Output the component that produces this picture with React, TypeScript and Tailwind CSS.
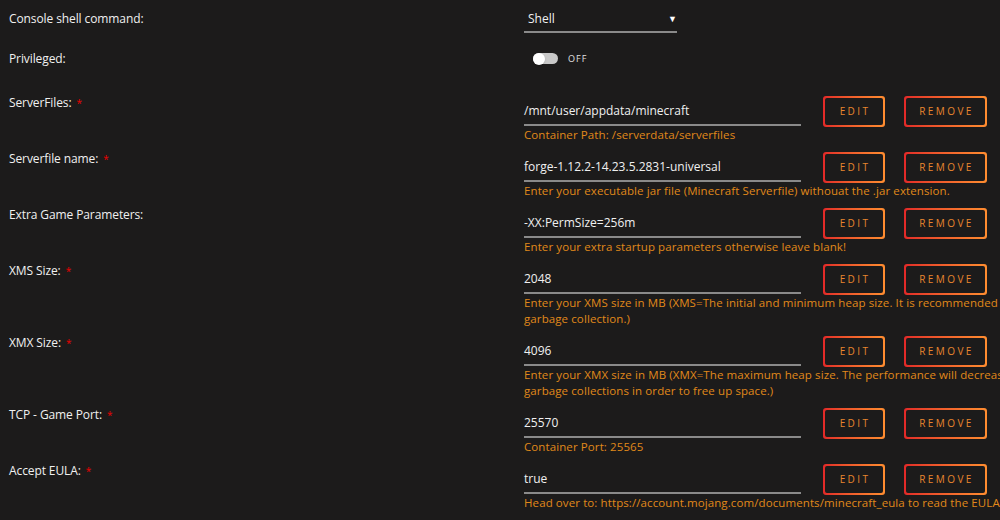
import React from "react";

const font = { fontFamily: '"Open Sans", "Liberation Sans", sans-serif' };

function Btn({ label, w }: { label: string; w: string }) {
  return (
    <div className={`rounded-[3px] bg-gradient-to-r from-[#e22828] to-[#ff8d30] p-[2px] ${w} h-[31px]`}>
      <div className="w-full h-full rounded-[2px] bg-[#1c1b1b] flex items-center justify-center text-[10px] tracking-[2.4px] font-medium text-[#e8862e] pl-[2px]">
        {label}
      </div>
    </div>
  );
}

type Row = { label: string; req?: boolean; value: string; desc: string[] };

const rows: Row[] = [
  { label: "ServerFiles:", req: true, value: "/mnt/user/appdata/minecraft", desc: ["Container Path: /serverdata/serverfiles"] },
  { label: "Serverfile name:", req: true, value: "forge-1.12.2-14.23.5.2831-universal", desc: ["Enter your executable jar file (Minecraft Serverfile) withouat the .jar extension."] },
  { label: "Extra Game Parameters:", value: "-XX:PermSize=256m", desc: ["Enter your extra startup parameters otherwise leave blank!"] },
  { label: "XMS Size:", req: true, value: "2048", desc: ["Enter your XMS size in MB (XMS=The initial and minimum heap size. It is recommended to set the minimum heap size equivalent to the maximum heap size in order to minimize the", "garbage collection.)"] },
  { label: "XMX Size:", req: true, value: "4096", desc: ["Enter your XMX size in MB (XMX=The maximum heap size. The performance will decrease if the max heap value is set lower than the amount of live data. It will force frequent", "garbage collections in order to free up space.)"] },
  { label: "TCP - Game Port:", req: true, value: "25570", desc: ["Container Port: 25565"] },
  { label: "Accept EULA:", req: true, value: "true", desc: ["Head over to: https://account.mojang.com/documents/minecraft_eula to read the EULA."] },
];

function Label({ text, req, lh = "leading-4" }: { text: string; req?: boolean; lh?: string }) {
  return (
    <div className={`w-[524px] shrink-0 pl-[9px] ${lh} text-[12px] text-[#f0f0f0] tracking-[-0.1px]`}>
      {text}
      {req && <span className="text-[#e00] text-[10px] align-top ml-[5px]">*</span>}
    </div>
  );
}

export default function App() {
  return (
    <div className="w-[1000px] h-[520px] bg-[#1c1b1b] overflow-hidden" style={font}>
      <div className="flex flex-col pt-[11px]">
        {/* Console shell */}
        <div className="flex">
          <Label text="Console shell command:" />
          <div className="w-[153px] h-[22px] border-b-2 border-[#8a8a8a] flex items-start justify-between pl-[4px] pr-0">
            <span className="leading-4 text-[12px] text-[#f0f0f0]">Shell</span>
            <span className="leading-4 text-[9px] text-white">▼</span>
          </div>
        </div>
        {/* Privileged */}
        <div className="flex mt-[18px] h-[45px]">
          <Label text="Privileged:" />
          <div className="flex items-start pt-[2px] pl-[9px] gap-[10px]">
            <div className="relative w-[25px] h-[11px] rounded-full bg-[#c8c8c8]">
              <div className="absolute left-0 top-[-0.5px] w-[12px] h-[12px] rounded-full bg-white shadow" />
            </div>
            <span className="leading-[11px] text-[9px] tracking-[1px] text-[#e0e0e0]">OFF</span>
          </div>
        </div>
        {rows.map((r) => (
          <div key={r.label} className="flex pb-[9px]">
            <Label text={r.label} req={r.req} lh="leading-[14px]" />
            <div className="flex flex-col min-w-0">
              <div className="flex items-start">
                <div className="w-[277px] h-[30px] border-b-2 border-[#8a8a8a] pt-[7px] leading-4 text-[12px] text-[#f0f0f0]">
                  {r.value}
                </div>
                <div className="ml-[22px] flex gap-[19px]">
                  <Btn label="EDIT" w="w-[62px]" />
                  <Btn label="REMOVE" w="w-[83px]" />
                </div>
              </div>
              {r.desc.map((d, i) => (
                <div key={i} className="leading-4 text-[11.5px] text-[#e0891a] whitespace-nowrap tracking-[0.1px]">
                  {d}
                </div>
              ))}
            </div>
          </div>
        ))}
      </div>
    </div>
  );
}
